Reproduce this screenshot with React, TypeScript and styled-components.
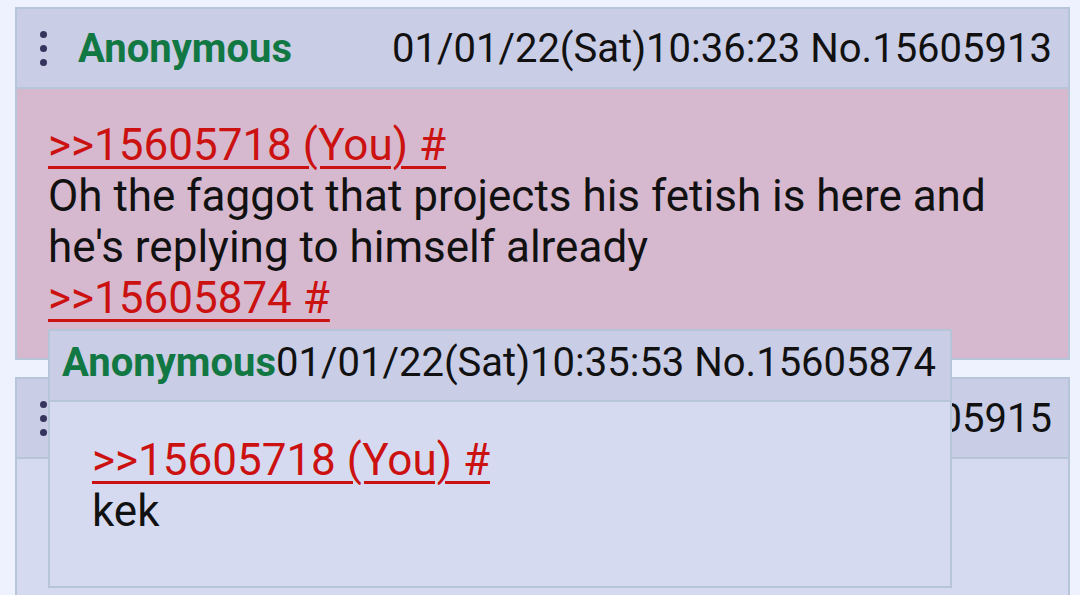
import React from "react"
import styled, { createGlobalStyle } from "styled-components"

const border = "#b7c5d9"
const headerBg = "#c9cde6"
const postBg = "#d6daf0"
const highlightBg = "#d6b9cf"
const nameColor = "#117743"
const quoteColor = "#cc1111"

const GlobalStyle = createGlobalStyle`
  html, body {
    margin: 0;
    padding: 0;
    background: #eef2ff;
    overflow: hidden;
  }

  body {
    font-family: Roboto, "Noto Sans", sans-serif;
    color: #111;
    -webkit-font-smoothing: antialiased;
  }
`

const Thread = styled.div`
  position: relative;
  height: 595px;
  box-sizing: border-box;
  padding: 7px 10px 0 15px;
  display: flex;
  flex-direction: column;
  gap: 17px;
  overflow: hidden;
`

// the last post runs on past the bottom of the screen, so it has no bottom edge
const Post = styled.div<{ $you?: boolean; $grow?: boolean }>`
  border: 2px solid ${border};
  border-bottom-width: ${(p) => (p.$grow ? 0 : "2px")};
  background: ${(p) => (p.$you ? highlightBg : postBg)};
  flex: ${(p) => (p.$grow ? "1 0 auto" : "0 0 auto")};
`

const Header = styled.div`
  display: flex;
  align-items: center;
  height: 78px;
  padding: 0 16px 0 23px;
  background: ${headerBg};
  border-bottom: 2px solid ${border};
  font-size: 40px;
  white-space: nowrap;
`

const Dots = styled.div`
  display: flex;
  flex-direction: column;
  gap: 7px;
  margin-right: 31px;

  span {
    width: 7px;
    height: 7px;
    border-radius: 50%;
    background: #34345c;
  }
`

const Name = styled.span`
  color: ${nameColor};
  font-weight: 700;
`

const Meta = styled.span`
  margin-left: auto;
  color: #111;
`

const Body = styled.div<{ $pad?: string }>`
  padding: ${(p) => p.$pad || "31px 31px 34px"};
  font-size: 44px;
  line-height: 51px;
`

const Quote = styled.a`
  display: inline-block;
  color: ${quoteColor};
  text-decoration: underline;
  text-decoration-thickness: 3px;
  text-underline-offset: 6px;
`

const Popup = styled.div`
  position: absolute;
  left: 48px;
  top: 329px;
  width: 904px;
  height: 259px;
  box-sizing: border-box;
  border: 2px solid ${border};
  background: ${postBg};
`

const PopupHeader = styled.div`
  display: flex;
  align-items: center;
  height: 71px;
  padding: 0 12px 6px;
  box-sizing: border-box;
  background: ${headerBg};
  border-bottom: 2px solid ${border};
  font-size: 40px;
  white-space: nowrap;
`

function MenuDots() {
  return (
    <Dots>
      <span />
      <span />
      <span />
    </Dots>
  )
}

export default function App() {
  return (
    <>
      <GlobalStyle />
      <Thread>
        <Post $you>
          <Header>
            <MenuDots />
            <Name>Anonymous</Name>
            <Meta>01/01/22(Sat)10:36:23 No.15605913</Meta>
          </Header>
          <Body>
            <Quote>&gt;&gt;15605718 (You) #</Quote>
            <div>
              Oh the faggot that projects his fetish is here and he's replying to himself already
            </div>
            <Quote>&gt;&gt;15605874 #</Quote>
          </Body>
        </Post>

        <Post $grow>
          <Header>
            <MenuDots />
            <Name>Anonymous</Name>
            <Meta>01/01/22(Sat)10:36:41 No.15605915</Meta>
          </Header>
          <Body />
        </Post>

        <Popup>
          <PopupHeader>
            <Name>Anonymous</Name>
            <span>01/01/22(Sat)10:35:53 No.15605874</span>
          </PopupHeader>
          <Body $pad="33px 42px">
            <Quote>&gt;&gt;15605718 (You) #</Quote>
            <div>kek</div>
          </Body>
        </Popup>
      </Thread>
    </>
  )
}
